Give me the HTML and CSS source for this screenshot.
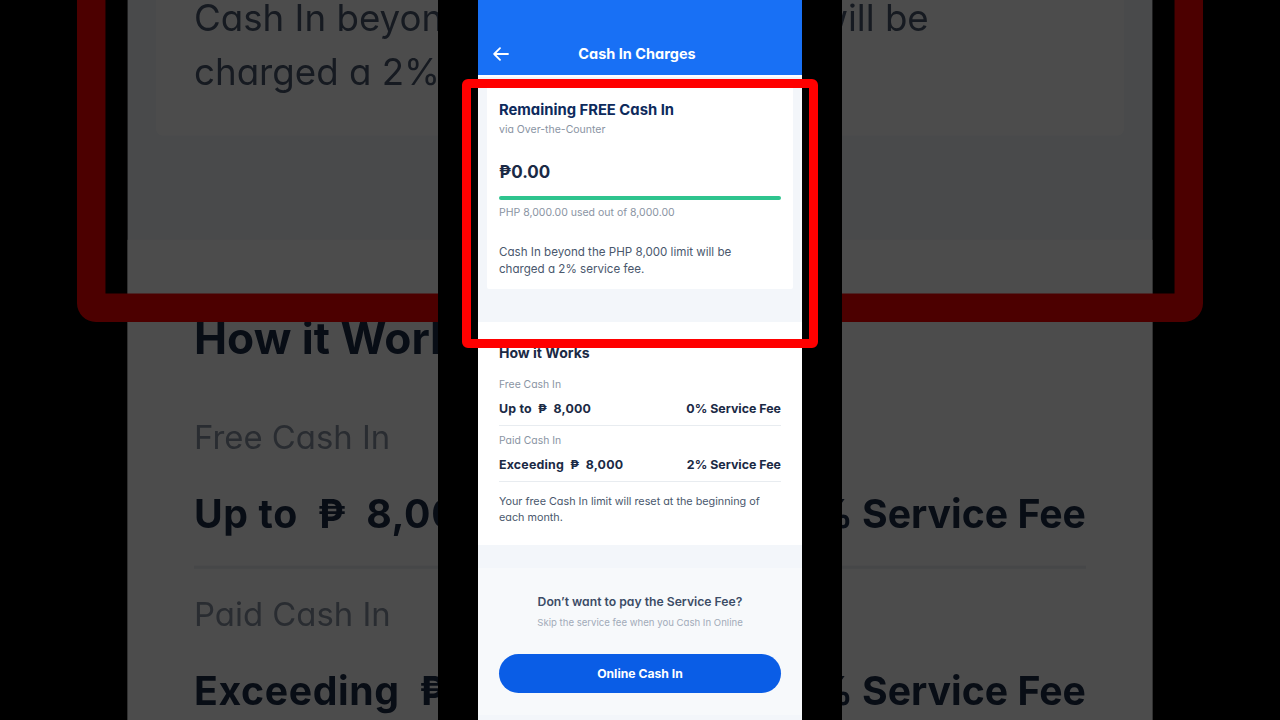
FILE: index.html
```html
<!DOCTYPE html>
<html lang="en">
<head>
<meta charset="UTF-8" />
<meta name="viewport" content="width=device-width, initial-scale=1" />
<title>Cash In Charges</title>
<link rel="stylesheet" href="styles.css">
</head>
<body>
  <div class="stage">
    <div class="backdrop"><div class="zoom"></div></div>

    <div class="video">
      <div class="phone">
        <header class="topbar">
          <svg class="back" width="16" height="14" viewBox="0 0 16 14" fill="none" stroke="#fff" stroke-width="1.8" stroke-linecap="round" stroke-linejoin="round">
            <path d="M15 7H1.5M7 1.2L1.2 7L7 12.8"/>
          </svg>
          <span class="title">Cash In Charges</span>
        </header>

        <div class="content">
          <section class="card">
            <h2>Remaining FREE Cash In</h2>
            <p class="muted">via Over-the-Counter</p>
            <div class="amount">₱0.00</div>
            <div class="bar"><span style="width: 100%"></span></div>
            <p class="muted used">PHP 8,000.00 used out of 8,000.00</p>
            <p class="note">Cash In beyond the PHP 8,000 limit will be charged a 2% service fee.</p>
          </section>

          <section class="how">
            <h3>How it Works</h3>
            <p class="muted label">Free Cash In</p>
            <div class="row"><span>Up to &nbsp;₱&nbsp; 8,000</span><span>0% Service Fee</span></div>
            <p class="muted label">Paid Cash In</p>
            <div class="row"><span>Exceeding &nbsp;₱&nbsp; 8,000</span><span>2% Service Fee</span></div>
            <p class="note reset">Your free Cash In limit will reset at the beginning of each month.</p>
          </section>

          <section class="online">
            <h4>Don’t want to pay the Service Fee?</h4>
            <p class="hint">Skip the service fee when you Cash In Online</p>
            <button class="cta">Online Cash In</button>
          </section>
        </div>
      </div>
      <div class="marker"></div>
    </div>
  </div>

<script>
  // backdrop: a blown up copy of the clip behind it
  const clip = document.querySelector('.video');
  document.querySelector('.zoom').appendChild(clip.cloneNode(true));
</script>
</body>
</html>
```

FILE: styles.css
```css
:root {
  --navy: #0d2a5c;
  --ink: #1b2a45;
  --text: #4a586d;
  --muted: #8a94a3;
  --blue: #1870f5;
  --cta: #0a5de6;
  --soft: #f3f6fa;
}

body {
  margin: 0;
  background: #000;
  font-family: Inter, "Noto Sans", sans-serif;
  font-feature-settings: "cv11";
}

p, h2, h3, h4 {
  margin: 0;
  font-weight: normal;
}

.stage {
  position: relative;
  width: 1280px;
  height: 720px;
  overflow: hidden;
  display: flex;
  justify-content: center;
}

/* enlarged, dimmed copy behind the clip */
.backdrop {
  position: absolute;
  inset: 0;
  overflow: hidden;
  filter: brightness(0.3);
}
.backdrop .zoom {
  width: 1280px;
  height: 720px;
  display: flex;
  justify-content: center;
  transform: scale(3.163);
  transform-origin: 640px 360px;
}

.video {
  position: relative;
  z-index: 1;
  width: 324px;
  height: 720px;
  padding: 0 40px;
  background: #000;
}

.phone {
  height: 720px;
  background: var(--soft);
  display: flex;
  flex-direction: column;
}

.topbar {
  height: 77px;
  flex: none;
  box-sizing: border-box;
  background: var(--blue);
  border-bottom: 2px solid #fff;
  display: grid;
  grid-template-columns: 24px 1fr 24px;
  align-items: center;
  padding: 32px 21px 0 15px;
}
.topbar .back {
  display: block;
}
.topbar .title {
  text-align: center;
  color: #fff;
  font-weight: 700;
  font-size: 14.5px;
  line-height: 22px;
}

.content {
  flex: 1;
  display: flex;
  flex-direction: column;
}

.muted {
  color: var(--muted);
  font-size: 10.5px;
  line-height: 14px;
}

.note {
  color: var(--text);
  font-size: 11.6px;
  line-height: 17px;
}

.card {
  background: #fff;
  margin: 9px 9px 0;
  padding: 15px 12px 11px;
  border-radius: 2px;
}
.card h2 {
  color: var(--navy);
  font-size: 14.8px;
  font-weight: 700;
  line-height: 18px;
}
.card .muted {
  margin-top: 4px;
}
.amount {
  margin-top: 24px;
  color: var(--ink);
  font-size: 17px;
  font-weight: 700;
  line-height: 22px;
}
.bar {
  margin-top: 13px;
  height: 4px;
  border-radius: 2px;
  background: #e4e9ef;
  overflow: hidden;
}
.bar span {
  display: block;
  height: 100%;
  background: #2ec48e;
}
.card .used {
  margin-top: 6px;
}
.card .note {
  margin-top: 24px;
  padding-right: 40px;
}

.how {
  margin-top: 33px;
  background: #fff;
  padding: 22px 21px 19px;
}
.how h3 {
  color: var(--ink);
  font-size: 14px;
  font-weight: 700;
  line-height: 18px;
  margin-bottom: 16px;
}
.how .label {
  font-size: 10.4px;
}
.row {
  display: flex;
  justify-content: space-between;
  margin-top: 9px;
  padding-bottom: 8px;
  border-bottom: 1px solid #e8ecf0;
  margin-bottom: 8px;
  color: var(--ink);
  font-size: 12.4px;
  font-weight: 700;
  line-height: 16px;
}
.row span:first-child {
  letter-spacing: 0.2px;
}
.how .reset {
  margin-top: 12px;
  line-height: 16px;
  font-size: 10.8px;
  padding-right: 10px;
}

.online {
  flex: 1;
  margin-top: 23px;
  margin-bottom: 5px;
  background: #f7f9fb;
  padding: 25px 21px 0;
  text-align: center;
}
.online h4 {
  color: #3c4c66;
  font-size: 12.2px;
  font-weight: 600;
  line-height: 18px;
}
.hint {
  margin-top: 5px;
  color: #a2abb9;
  font-size: 9.6px;
  line-height: 14px;
}
.cta {
  margin-top: 24px;
  width: 100%;
  height: 39px;
  border: none;
  border-radius: 20px;
  background: var(--cta);
  color: #fff;
  font-family: inherit;
  font-size: 12.2px;
  font-weight: 700;
}

/* red annotation box drawn over the clip */
.marker {
  position: absolute;
  left: 24px;
  top: 79px;
  width: 356px;
  height: 269px;
  box-sizing: border-box;
  border: 9px solid #ff0000;
  border-radius: 6px;
}
```
